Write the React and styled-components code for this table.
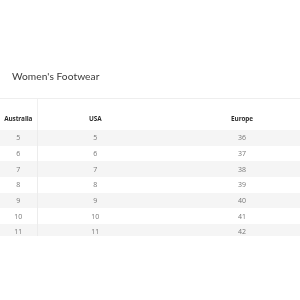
import React from "react";
import styled, { createGlobalStyle } from "styled-components";

const Global = createGlobalStyle`
  html, body { margin: 0; padding: 0; background: #fff; }
  body {
    font-family: "Lato", "Liberation Sans", sans-serif;
    -webkit-font-smoothing: antialiased;
  }
`;

const Page = styled.div`
  width: 300px;
  height: 300px;
  overflow: hidden;
  padding-top: 68px;
  box-sizing: border-box;
  will-change: transform;
`;

const Title = styled.h2`
  margin: 0 0 0 12px;
  height: 16px;
  line-height: 16px;
  font-size: 10.2px;
  font-weight: 400;
  color: #3a3a3a;
  letter-spacing: 0.05px;
`;

const TableWrap = styled.div`
  margin-top: 14px;
  border-top: 1px solid #eeeeee;
  height: 137px;
  overflow: hidden;
`;

const Table = styled.table`
  width: 331px;
  border-collapse: collapse;
  table-layout: fixed;
  font-family: "Open Sans", "Liberation Sans", sans-serif;
`;

const Th = styled.th`
  width: ${(p) => p.$w}px;
  height: 31px;
  box-sizing: border-box;
  padding: 8px 0 0;
  font-size: 6.4px;
  font-weight: 700;
  color: #2e2e2e;
  text-align: center;
  vertical-align: middle;
  letter-spacing: -0.1px;
  border-right: ${(p) => (p.$first ? "1px solid #f0f0f0" : "none")};
`;

const Tr = styled.tr`
  background: ${(p) => (p.$striped ? "#f5f5f5" : "transparent")};
`;

const Td = styled.td`
  height: 15.67px;
  padding: 0;
  font-size: 7px;
  color: #777777;
  text-align: center;
  vertical-align: middle;
  line-height: 1;
  border-right: ${(p) => (p.$first ? "1px solid #ececec" : "none")};
`;

const rows = [
  [5, 5, 36],
  [6, 6, 37],
  [7, 7, 38],
  [8, 8, 39],
  [9, 9, 40],
  [10, 10, 41],
  [11, 11, 42],
];

export default function App() {
  return (
    <>
      <Global />
      <Page>
        <Title>Women's Footwear</Title>
        <TableWrap>
          <Table>
            <thead>
              <tr>
                <Th $w={37} $first>Australia</Th>
                <Th $w={116}>USA</Th>
                <Th $w={178}>Europe</Th>
              </tr>
            </thead>
            <tbody>
              {rows.map((r, i) => (
                <Tr key={i} $striped={i % 2 === 0}>
                  <Td $first>{r[0]}</Td>
                  <Td>{r[1]}</Td>
                  <Td>{r[2]}</Td>
                </Tr>
              ))}
            </tbody>
          </Table>
        </TableWrap>
      </Page>
    </>
  );
}
